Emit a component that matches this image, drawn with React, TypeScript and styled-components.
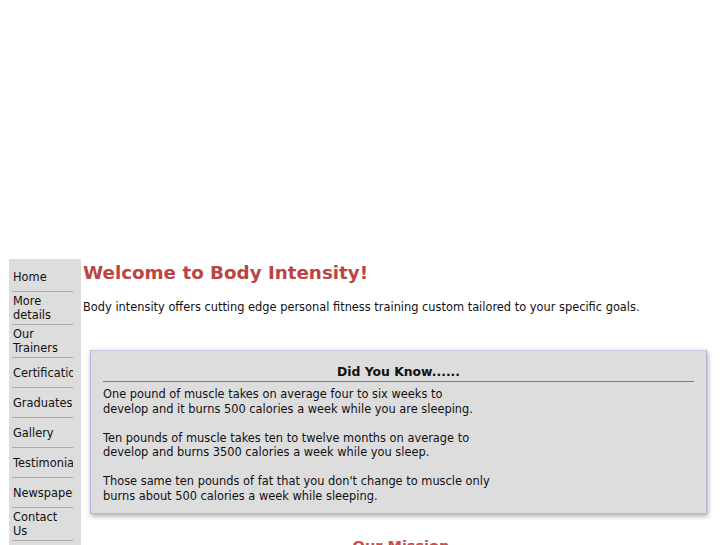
import React from 'react';
import styled, {createGlobalStyle} from 'styled-components';

const GlobalStyle = createGlobalStyle`
  html, body {
    margin: 0;
    padding: 0;
    background: #ffffff;
  }
  body {
    margin: 8px;
    font-family: "DejaVu Sans", Verdana, sans-serif;
    font-size: 11.4px;
    color: #111111;
  }
`

const menu = [
    'Home',
    'More details',
    'Our Trainers',
    'Certifications',
    'Graduates',
    'Gallery',
    'Testimonials',
    'Newspapers',
    'Contact Us',
]

const facts = [
    ['One pound of muscle takes on average four to six weeks to', 'develop and it burns 500 calories a week while you are sleeping.'],
    ['Ten pounds of muscle takes ten to twelve months on average to', 'develop and burns 3500 calories a week while you sleep.'],
    ['Those same ten pounds of fat that you don\'t change to muscle only', 'burns about 500 calories a week while sleeping.'],
]

export default function App() {
    return (
        <>
            <GlobalStyle/>
            <Header/>
            <PageWrapper>
                <Sidebar>
                    {menu.map(item => (
                        <MenuItem key={item} href="#">{item}</MenuItem>
                    ))}
                </Sidebar>
                <Main>
                    <Title>Welcome to Body Intensity!</Title>
                    <Intro>
                        Body intensity offers cutting edge personal fitness training custom tailored to your specific goals.
                    </Intro>
                    <FactBox>
                        <FactTitle>Did You Know......</FactTitle>
                        {facts.map((lines, i) => (
                            <Fact key={i}>
                                {lines[0]}<br/>{lines[1]}
                            </Fact>
                        ))}
                    </FactBox>
                    <Mission>Our Mission</Mission>
                </Main>
            </PageWrapper>
        </>
    );
}

const Header = styled.div`
  height: 251px;
`
const PageWrapper = styled.div`
  display: flex;
  align-items: flex-start;
`
const Sidebar = styled.nav`
  display: flex;
  flex-direction: column;
  width: 72px;
  margin-left: 1px;
  padding-top: 2px;
  padding-bottom: 20px;
  background-color: #dddddd;
`
const MenuItem = styled.a`
  display: flex;
  align-items: center;
  width: 60px;
  min-height: 25px;
  margin-left: 3px;
  padding: 2px 0 2px 1px;
  border-bottom: 1px solid #aaaaaa;
  overflow: hidden;
  line-height: 14px;
  color: #111111;
  text-decoration: none;
  font-size: 11.4px;
  white-space: normal;
  &:first-child {
    padding-top: 3px;
  }
`
const Main = styled.main`
  flex: 1;
  padding-left: 2px;
`
const Title = styled.h1`
  margin: 3px 0 0 0;
  font-size: 18.3px;
  line-height: 22px;
  font-weight: bold;
  color: #bb4444;
`
const Intro = styled.p`
  margin: 16px 0 0 0;
  line-height: 14px;
`
const FactBox = styled.div`
  margin: 36px 12px 0 7px;
  padding: 13px 12px 10px 12px;
  background-color: #dddddd;
  border: 1px solid #b4b4dc;
  border-top-color: #c8c8dc;
  box-shadow: 1px 2px 5px rgba(0, 0, 0, 0.35);
`
const FactTitle = styled.h3`
  margin: 0 0 5px 0;
  padding-bottom: 2px;
  border-bottom: 1px solid #c06060;
  text-align: center;
  font-size: 12.4px;
  line-height: 15px;
  font-weight: bold;
`
const Fact = styled.p`
  margin: 0 0 14.5px 0;
  line-height: 14.5px;
  &:last-child {
    margin-bottom: 0;
  }
`
const Mission = styled.h2`
  margin: 24px 0 0 0;
  text-align: center;
  font-size: 14.5px;
  color: #cc4c4c;
`
